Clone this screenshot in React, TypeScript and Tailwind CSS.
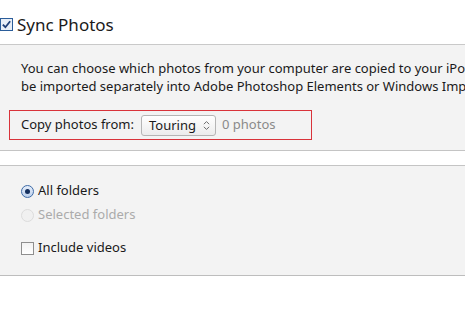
import React from 'react';

const font = { fontFamily: '"Segoe UI", "Noto Sans", sans-serif' };

export default function App() {
    return (
        <div className="w-[465px] h-[315px] bg-white overflow-hidden text-[#1a1a1a]" style={font}>
            {/* Header */}
            <div className="h-[45px] flex items-center pt-[5px] border-b border-[#c9c9c9]">
                <div className="w-[13px] h-[13px] border border-[#2b5d9a] bg-[#e8eef7] flex items-center justify-center">
                    <svg viewBox="0 0 12 12" className="w-[11px] h-[11px]">
                        <path d="M2 6.2 L4.8 9 L10 2.5" fill="none" stroke="#1f3f78" strokeWidth="2" />
                    </svg>
                </div>
                <span className="ml-[4px] text-[17px] leading-none">Sync Photos</span>
            </div>

            {/* Source section */}
            <div className="h-[106px] bg-[#f3f3f3] border-b border-[#c4c4c4] pl-[21px] pt-[14px] overflow-hidden">
                <p className="text-[13px] leading-[18px] whitespace-nowrap">
                    You can choose which photos from your computer are copied to your iPod.
                    <br />
                    be imported separately into Adobe Photoshop Elements or Windows Import.
                </p>
                <div className="ml-[-12px] mt-[15px] w-[303px] h-[30px] border border-[#d9333a] flex items-center pl-[11px]">
                    <span className="text-[13px]">Copy photos from:</span>
                    <div className="ml-[7px] h-[21px] w-[75px] rounded-[3px] border border-[#b5b5b5] bg-gradient-to-b from-white to-[#ececec] flex items-center pl-[7px] pr-[5px] justify-between">
                        <span className="text-[13px] leading-none">Touring</span>
                        <svg viewBox="0 0 8 12" className="w-[7px] h-[11px]">
                            <path d="M1 4.5 L4 1.5 L7 4.5 M1 7.5 L4 10.5 L7 7.5" fill="none" stroke="#666" strokeWidth="1.1" />
                        </svg>
                    </div>
                    <span className="ml-[6px] text-[13px] text-[#8a8a8a]">0 photos</span>
                </div>
            </div>

            <div className="h-[15px] bg-white border-b border-[#c4c4c4]" />

            {/* Options */}
            <div className="h-[110px] bg-[#f3f3f3] border-b border-[#bdbdbd] pl-[21px] pt-[17px] text-[13px]">
                <div className="flex items-center h-[16px]">
                    <div className="w-[13px] h-[13px] rounded-full border border-[#3d6aa6] bg-gradient-to-b from-[#e6eefa] to-[#bcd0ec] flex items-center justify-center">
                        <div className="w-[5px] h-[5px] rounded-full bg-[#142f5e]" />
                    </div>
                    <span className="ml-[4px]">All folders</span>
                </div>
                <div className="flex items-center h-[16px] mt-[8px]">
                    <div className="w-[13px] h-[13px] rounded-full border border-[#dcdcdc] bg-[#f0f0f0]" />
                    <span className="ml-[4px] text-[#ababab]">Selected folders</span>
                </div>
                <div className="flex items-center h-[16px] mt-[17px]">
                    <div className="w-[13px] h-[13px] border border-[#8e8e8e] bg-gradient-to-b from-[#f2f2f2] to-white" />
                    <span className="ml-[4px]">Include videos</span>
                </div>
            </div>
        </div>
    );
}
